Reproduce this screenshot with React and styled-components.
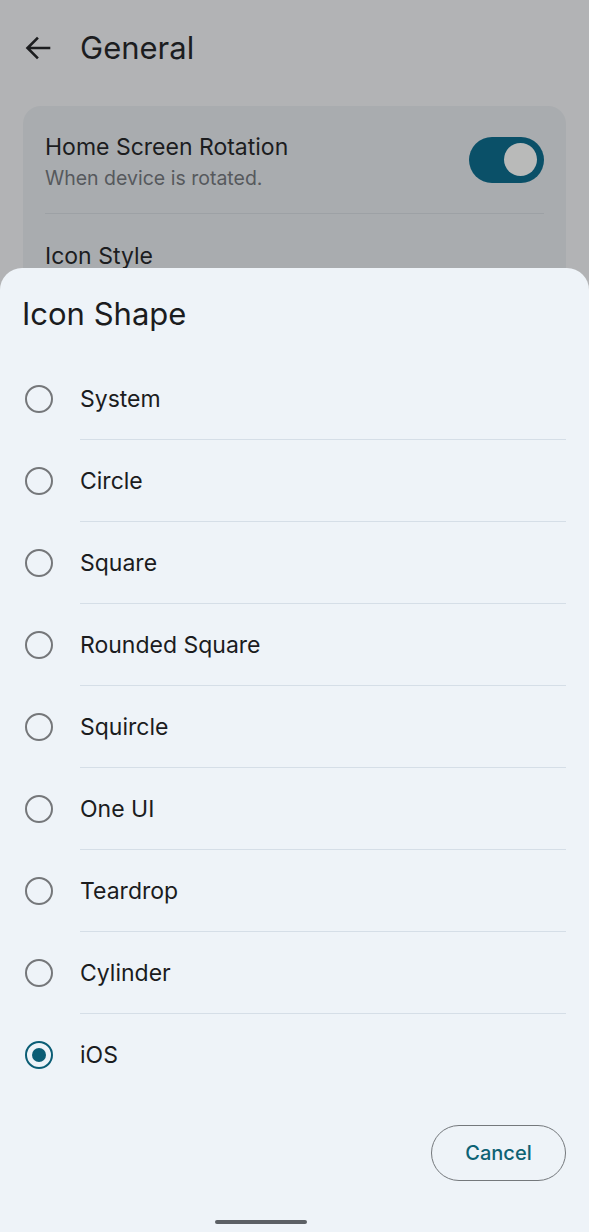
import React from "react";
import styled, { createGlobalStyle } from "styled-components";

const Global = createGlobalStyle`
  html, body { margin: 0; padding: 0; }
  body { font-family: Inter, "Noto Sans", Roboto, sans-serif; background: #b2b3b5; }
  * { box-sizing: border-box; }
`;

const Page = styled.div`
  position: relative;
  width: 589px;
  height: 1232px;
  overflow: hidden;
  background: #b2b3b5;
  color: #1b1c1e;
`;

const Header = styled.div`
  display: flex;
  align-items: center;
  height: 96px;
  padding-left: 25px;
  gap: 29px;
`;

const Title = styled.h1`
  margin: 0;
  font-size: 31px;
  font-weight: 400;
  line-height: 38px;
  color: #1c1d1f;
`;

const Card = styled.div`
  margin: 10px 23px 0;
  background: #a9acaf;
  border-radius: 18px;
  padding: 0 22px;
`;

const CardRow = styled.div`
  display: flex;
  align-items: center;
  justify-content: space-between;
  height: ${(p) => p.h}px;
  border-bottom: ${(p) => (p.divider ? "1.5px solid #9da1a5" : "none")};
`;

const Texts = styled.div`
  display: flex;
  flex-direction: column;
  padding-top: 6px;
`;

const Primary = styled.div`
  font-size: 23px;
  line-height: 30px;
  color: #1c1d1f;
`;

const Secondary = styled.div`
  font-size: 19.5px;
  line-height: 32px;
  color: #56595d;
`;

const Track = styled.div`
  width: 75px;
  height: 46px;
  border-radius: 23px;
  background: #0a5068;
  display: flex;
  align-items: center;
  justify-content: flex-end;
  padding-right: 7px;
`;

const Thumb = styled.div`
  width: 33px;
  height: 33px;
  border-radius: 50%;
  background: #b9bab9;
`;

const Sheet = styled.div`
  position: absolute;
  left: 0;
  right: 0;
  top: 268px;
  bottom: 0;
  background: #eef3f8;
  border-radius: 22px 22px 0 0;
  padding-top: 27px;
  display: flex;
  flex-direction: column;
`;

const SheetTitle = styled.h2`
  margin: 0 0 25px 22px;
  font-size: 31px;
  font-weight: 400;
  line-height: 38px;
  color: #1b1c1e;
`;

const List = styled.div`
  display: flex;
  flex-direction: column;
`;

const Row = styled.div`
  display: flex;
  align-items: center;
  height: 82px;
  padding-left: 25px;
`;

const Radio = styled.div`
  width: 28px;
  height: 28px;
  flex: none;
  border-radius: 50%;
  border: 2.5px solid ${(p) => (p.checked ? "#0b5d75" : "#75777a")};
  display: flex;
  align-items: center;
  justify-content: center;
  &::after {
    content: "";
    display: ${(p) => (p.checked ? "block" : "none")};
    width: 14px;
    height: 14px;
    border-radius: 50%;
    background: #0b5d75;
  }
`;

const Label = styled.div`
  flex: 1;
  align-self: stretch;
  display: flex;
  align-items: center;
  margin-left: 27px;
  margin-right: 23px;
  font-size: 23px;
  color: #1b1c1e;
  border-bottom: ${(p) => (p.last ? "none" : "1.5px solid #d5dee7")};
  padding-top: ${(p) => (p.last ? "0" : "1.5px")};
`;

const Actions = styled.div`
  display: flex;
  justify-content: flex-end;
  padding: 29px 23px 0;
`;

const CancelButton = styled.button`
  width: 135px;
  height: 56px;
  border-radius: 28px;
  border: 1.5px solid #74787c;
  background: transparent;
  color: #0d6274;
  font-family: Inter, "Noto Sans", sans-serif;
  font-size: 20px;
  font-weight: 500;
`;

const HomeBar = styled.div`
  position: absolute;
  bottom: 8px;
  left: 215px;
  width: 92px;
  height: 4px;
  border-radius: 2px;
  background: #5c6065;
`;

const options = [
  "System",
  "Circle",
  "Square",
  "Rounded Square",
  "Squircle",
  "One UI",
  "Teardrop",
  "Cylinder",
  "iOS",
];

export default function App() {
  const selected = "iOS";
  return (
    <Page>
      <Global />
      <Header>
        <svg width="26" height="24" viewBox="0 0 26 24" fill="none">
          <path
            d="M24 12H3M12 2.5L2.5 12l9.5 9.5"
            stroke="#1c1d1f"
            strokeWidth="2.6"
            strokeLinecap="square"
          />
        </svg>
        <Title>General</Title>
      </Header>
      <Card>
        <CardRow h={108} divider>
          <Texts>
            <Primary>Home Screen Rotation</Primary>
            <Secondary>When device is rotated.</Secondary>
          </Texts>
          <Track>
            <Thumb />
          </Track>
        </CardRow>
        <CardRow h={84}>
          <Primary>Icon Style</Primary>
        </CardRow>
      </Card>
      <Sheet>
        <SheetTitle>Icon Shape</SheetTitle>
        <List>
          {options.map((o, i) => (
            <Row key={o}>
              <Radio checked={o === selected} />
              <Label last={i === options.length - 1}>{o}</Label>
            </Row>
          ))}
        </List>
        <Actions>
          <CancelButton>Cancel</CancelButton>
        </Actions>
      </Sheet>
      <HomeBar />
    </Page>
  );
}
